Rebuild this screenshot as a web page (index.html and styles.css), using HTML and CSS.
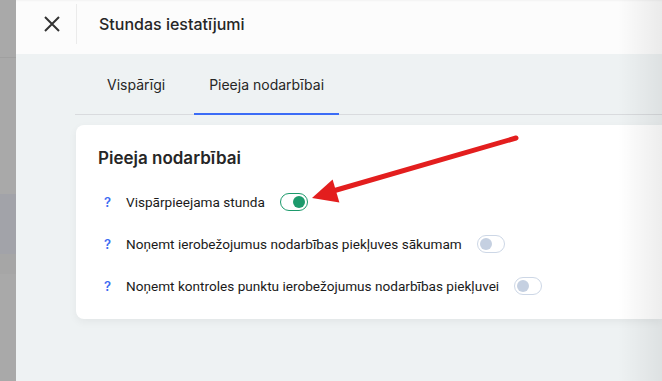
FILE: index.html
```html
<!DOCTYPE html>
<html lang="lv">
<head>
    <meta charset="UTF-8">
    <title>Stundas iestatījumi</title>
    <link rel="stylesheet" href="styles.css">
</head>
<body>
<div id="page">
    <div class="backdrop">
        <div class="bd-top"></div>
        <div class="bd-mid"></div>
        <div class="bd-row"></div>
    </div>
    <div class="drawer">
        <div class="head">
            <button class="close" aria-label="Aizvērt">
                <svg width="16" height="16" viewBox="0 0 16 16">
                    <path d="M1 1 L15 15 M15 1 L1 15" stroke="#333" stroke-width="2" fill="none"/>
                </svg>
            </button>
            <div class="title">Stundas iestatījumi</div>
        </div>
        <div class="content">
            <ul class="tabs">
                <li>Vispārīgi</li>
                <li class="selected">Pieeja nodarbībai</li>
            </ul>
            <div class="card">
                <h2>Pieeja nodarbībai</h2>
                <div class="row">
                    <span class="help">?</span>
                    <span class="label">Vispārpieejama stunda</span>
                    <span class="switch on"></span>
                </div>
                <div class="row">
                    <span class="help">?</span>
                    <span class="label">Noņemt ierobežojumus nodarbības piekļuves sākumam</span>
                    <span class="switch"></span>
                </div>
                <div class="row">
                    <span class="help">?</span>
                    <span class="label">Noņemt kontroles punktu ierobežojumus nodarbības piekļuvei</span>
                    <span class="switch"></span>
                </div>
            </div>
        </div>
        <div class="edge"></div>
    </div>
    <svg class="arrow" width="662" height="381" viewBox="0 0 662 381">
        <line x1="516" y1="138" x2="333" y2="191" stroke="#e31e1e" stroke-width="5" stroke-linecap="round"/>
        <polygon points="312,198 332.6,179.5 339.4,202.5" fill="#e31e1e"/>
    </svg>
</div>
</body>
</html>
```

FILE: styles.css
```css
*{
    margin: 0;
    padding: 0;
    box-sizing: border-box;
}
li{
    list-style: none;
}
html, body{
    height: 100%;
}
body{
    font-family: Inter, "Noto Sans", sans-serif;
    color: #222;
    overflow: hidden;
}
#page{
    position: relative;
    display: flex;
    height: 100%;
}
.backdrop{
    width: 16px;
    background-color: #a9a9a9;
    display: flex;
    flex-direction: column;
}
.bd-top{
    height: 58px;
    border-bottom: 1px solid #a0a0a0;
}
.bd-mid{
    height: 136px;
}
.bd-row{
    height: 60px;
    background-color: #a2a3a9;
    border-bottom: 20px solid #a6a6a6;
    box-sizing: content-box;
}
.drawer{
    position: relative;
    flex: 1;
    display: flex;
    flex-direction: column;
    background-color: #eef2f3;
}
.head{
    height: 54px;
    display: flex;
    align-items: center;
    background-color: #fcfcfc;
    box-shadow: inset 0 2px 2px -1px rgba(0,0,0,.04);
}
.close{
    width: 61px;
    height: 40px;
    margin-top: -6px;
    border: none;
    border-right: 1px solid #ebebeb;
    background: none;
    display: flex;
    align-items: center;
    justify-content: center;
    padding-left: 12px;
}
.title{
    margin-left: 22px;
    margin-top: -6px;
    font-size: 16px;
    font-weight: 500;
    color: #262626;
}
.content{
    padding-left: 59px;
}
.tabs{
    display: flex;
    gap: 14px;
    height: 61px;
    padding-left: 17px;
    border-bottom: 1px solid #d9dbde;
}
.tabs li{
    padding: 0 15px;
    display: flex;
    align-items: center;
    font-size: 14px;
    color: #262626;
}
.tabs .selected{
    border-bottom: 2px solid #3b6cf6;
    margin-bottom: -1px;
    padding-top: 1px;
}
.card{
    margin-top: 10px;
    margin-left: 1px;
    background-color: #fff;
    border-radius: 8px 0 0 8px;
    padding: 21px 0 12px 22px;
    box-shadow: 0 3px 8px rgba(0,0,0,.05);
}
.card h2{
    font-size: 17px;
    font-weight: 600;
    line-height: 24px;
    color: #262626;
    margin-bottom: 11px;
}
.row{
    height: 42px;
    display: flex;
    align-items: center;
    font-family: Roboto, "Liberation Sans", sans-serif;
    font-size: 13.6px;
    color: #1a1a1a;
}
.help{
    width: 28px;
    padding-left: 6px;
    font-family: Inter, sans-serif;
    color: #3d6cf2;
    font-weight: 600;
    font-size: 13px;
}
.switch{
    position: relative;
    width: 28px;
    height: 18px;
    margin-left: 15px;
    border: 1.5px solid #cdd7e6;
    border-radius: 9px;
    background-color: #fff;
}
.switch::after{
    content: "";
    position: absolute;
    left: 2px;
    top: 1.5px;
    width: 12px;
    height: 12px;
    border-radius: 50%;
    background-color: #c5d0e1;
}
.switch.on{
    border-color: #1d9a6c;
}
.switch.on::after{
    left: auto;
    right: 2px;
    background-color: #1d9a6c;
}
.edge{
    position: absolute;
    top: 0;
    right: 0;
    bottom: 0;
    width: 44px;
    background: linear-gradient(to right, rgba(0,0,0,0), rgba(0,0,0,.07));
    pointer-events: none;
}
.arrow{
    position: absolute;
    left: 0;
    top: 0;
    pointer-events: none;
}
```
